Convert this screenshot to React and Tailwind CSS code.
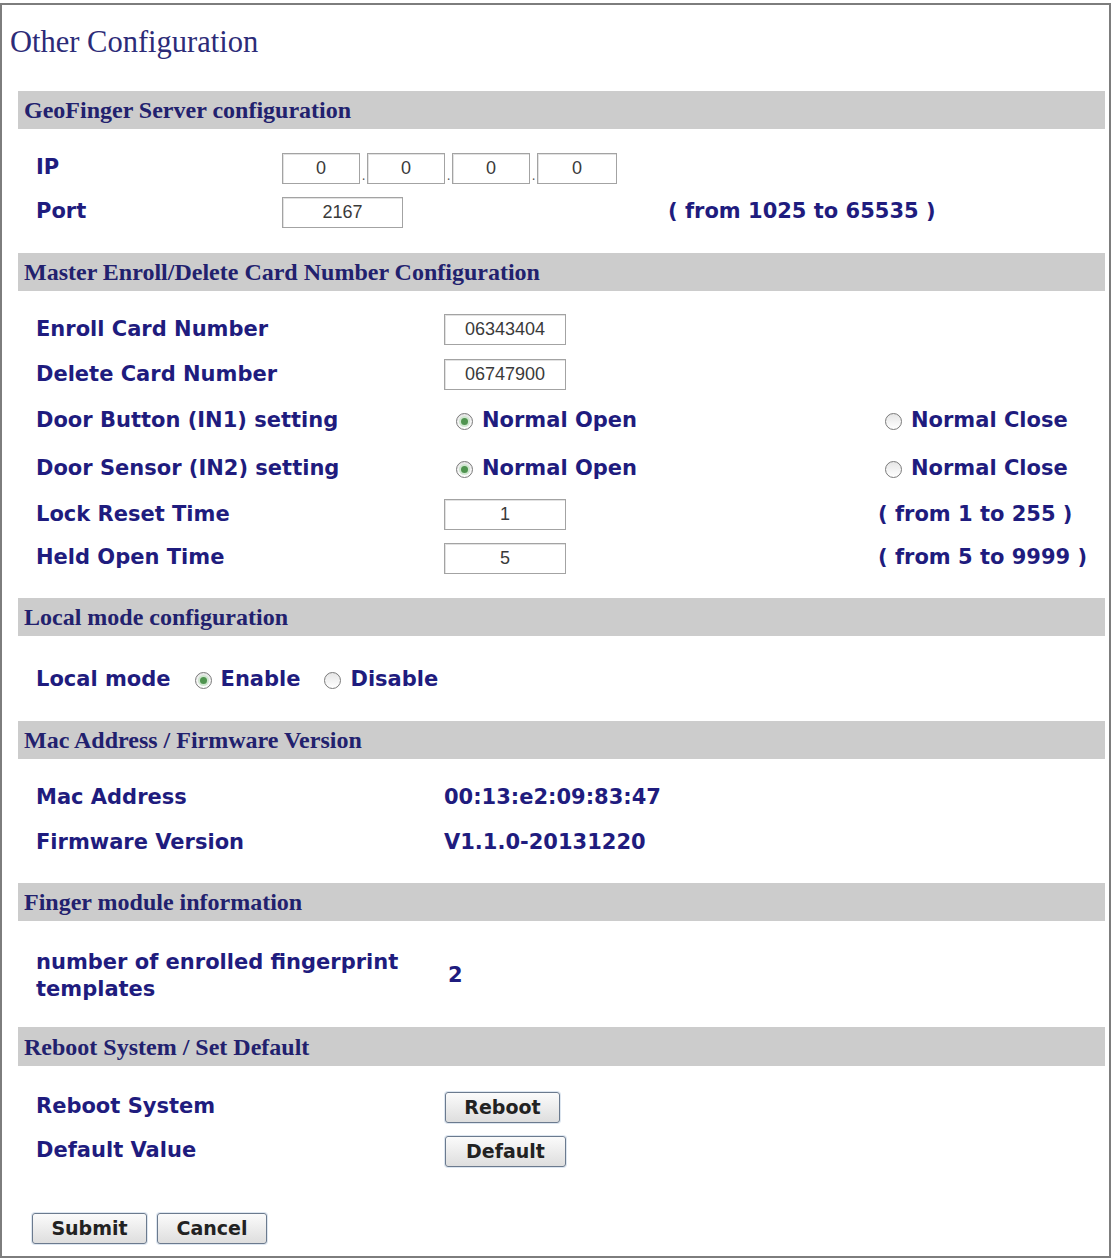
import React from 'react';

const LABEL = "font-['DejaVu_Sans',sans-serif] font-bold text-[21px] text-[#1f1c7e]";

const SectionBar = ({ title, h = 'h-[38px]' }) => (
    <div className={`${h} bg-[#cccccc] flex items-center pl-[6px]`}>
        <span className="font-['Liberation_Serif',serif] font-bold text-[24px] leading-none text-[#22216e]">
            {title}
        </span>
    </div>
);

const Field = ({ value, w = 'w-[122px]' }) => (
    <div className={`${w} h-[31px] shrink-0 border border-[#a3a3a3] shadow-[inset_1px_1px_0_#e2e2e2] bg-white flex items-center justify-center font-['Liberation_Sans',sans-serif] text-[18px] text-[#3a3a3a]`}>
        {value}
    </div>
);

const Radio = ({ checked, label }) => (
    <div className="flex items-center">
        <span className="w-[17px] h-[17px] shrink-0 rounded-full border-[1.5px] border-[#7a7a7a] bg-gradient-to-b from-[#e6e6e6] to-white flex items-center justify-center mr-[9px]">
            {checked && <span className="w-[7px] h-[7px] rounded-full bg-[#4f944f] ring-2 ring-[#cfe6cf]" />}
        </span>
        <span className={LABEL}>{label}</span>
    </div>
);

const Btn = ({ children, w }) => (
    <button className={`${w} h-[31px] rounded-[3px] border border-[#6b7a8e] shadow-[0_0_0_1px_#dde6f0] bg-gradient-to-b from-[#fbfbfb] to-[#dedede] font-['DejaVu_Sans',sans-serif] font-bold text-[19px] text-[#222] flex items-center justify-center`}>
        {children}
    </button>
);

const Row = ({ h = 'h-[44px]', children }) => (
    <div className={`${h} flex items-center pl-[18px]`}>{children}</div>
);

export default function App() {
    return (
        <div className="w-[1112px] h-[1259px] bg-white">
            <div className="mt-[3px] w-[1111px] h-[1255px] border-2 border-[#7d7d7d] bg-white">
                {/* page title */}
                <div className="h-[86px] pl-[8px] pt-[19px]">
                    <h1 className="font-['Liberation_Serif',serif] text-[30.5px] leading-[36px] text-[#2c2b78]">
                        Other Configuration
                    </h1>
                </div>

                <div className="pl-[16px] pr-[4px]">
                    <SectionBar title="GeoFinger Server configuration" />
                    <div className="h-[17px]" />
                    <Row>
                        <div className={`${LABEL} w-[246px]`}>IP</div>
                        <div className="flex items-end">
                            <Field value="0" w="w-[78px]" />
                            <span className="w-[7px] text-center text-[#555] text-[12px] leading-none mb-[2px]">.</span>
                            <Field value="0" w="w-[78px]" />
                            <span className="w-[7px] text-center text-[#555] text-[12px] leading-none mb-[2px]">.</span>
                            <Field value="0" w="w-[78px]" />
                            <span className="w-[7px] text-center text-[#555] text-[12px] leading-none mb-[2px]">.</span>
                            <Field value="0" w="w-[80px]" />
                        </div>
                    </Row>
                    <Row>
                        <div className={`${LABEL} w-[246px]`}>Port</div>
                        <Field value="2167" w="w-[121px]" />
                        <div className={`${LABEL} ml-[265px]`}>( from 1025 to 65535 )</div>
                    </Row>
                    <div className="h-[19px]" />

                    <SectionBar title="Master Enroll/Delete Card Number Configuration" />
                    <div className="h-[16px]" />
                    <Row h="h-[45px]">
                        <div className={`${LABEL} w-[408px]`}>Enroll Card Number</div>
                        <Field value="06343404" />
                    </Row>
                    <Row h="h-[45px]">
                        <div className={`${LABEL} w-[408px]`}>Delete Card Number</div>
                        <Field value="06747900" />
                    </Row>
                    <Row h="h-[48px]">
                        <div className={`${LABEL} w-[408px]`}>Door Button (IN1) setting</div>
                        <div className="w-[434px] pl-[12px]">
                            <Radio checked label="Normal Open" />
                        </div>
                        <div className="pl-[7px]">
                            <Radio label="Normal Close" />
                        </div>
                    </Row>
                    <Row h="h-[48px]">
                        <div className={`${LABEL} w-[408px]`}>Door Sensor (IN2) setting</div>
                        <div className="w-[434px] pl-[12px]">
                            <Radio checked label="Normal Open" />
                        </div>
                        <div className="pl-[7px]">
                            <Radio label="Normal Close" />
                        </div>
                    </Row>
                    <Row h="h-[43px]">
                        <div className={`${LABEL} w-[408px]`}>Lock Reset Time</div>
                        <div className="w-[434px]">
                            <Field value="1" />
                        </div>
                        <div className={LABEL}>( from 1 to 255 )</div>
                    </Row>
                    <Row>
                        <div className={`${LABEL} w-[408px]`}>Held Open Time</div>
                        <div className="w-[434px]">
                            <Field value="5" />
                        </div>
                        <div className={LABEL}>( from 5 to 9999 )</div>
                    </Row>
                    <div className="h-[18px]" />

                    <SectionBar title="Local mode configuration" />
                    <div className="h-[22px]" />
                    <Row>
                        <div className={`${LABEL} mr-[24px]`}>Local mode</div>
                        <Radio checked label="Enable" />
                        <div className="ml-[24px]">
                            <Radio label="Disable" />
                        </div>
                    </Row>
                    <div className="h-[19px]" />

                    <SectionBar title="Mac Address / Firmware Version" />
                    <div className="h-[17px]" />
                    <Row>
                        <div className={`${LABEL} w-[408px]`}>Mac Address</div>
                        <div className={LABEL}>00:13:e2:09:83:47</div>
                    </Row>
                    <Row h="h-[46px]">
                        <div className={`${LABEL} w-[408px]`}>Firmware Version</div>
                        <div className={LABEL}>V1.1.0-20131220</div>
                    </Row>
                    <div className="h-[17px]" />

                    <SectionBar title="Finger module information" />
                    <div className="h-[19px]" />
                    <Row h="h-[71px]">
                        <div className={`${LABEL} w-[408px] leading-[27px]`}>
                            number of enrolled fingerprint templates
                        </div>
                        <div className={`${LABEL} ml-[4px]`}>2</div>
                    </Row>
                    <div className="h-[16px]" />

                    <SectionBar title="Reboot System / Set Default" h="h-[39px]" />
                    <div className="h-[19px]" />
                    <Row>
                        <div className={`${LABEL} w-[409px]`}>Reboot System</div>
                        <Btn w="w-[115px]">Reboot</Btn>
                    </Row>
                    <Row>
                        <div className={`${LABEL} w-[409px]`}>Default Value</div>
                        <Btn w="w-[121px]">Default</Btn>
                    </Row>
                    <div className="h-[40px]" />

                    <div className="flex items-center gap-[10px] pl-[14px]">
                        <Btn w="w-[115px]">Submit</Btn>
                        <Btn w="w-[110px]">Cancel</Btn>
                    </div>
                </div>
            </div>
        </div>
    );
}
